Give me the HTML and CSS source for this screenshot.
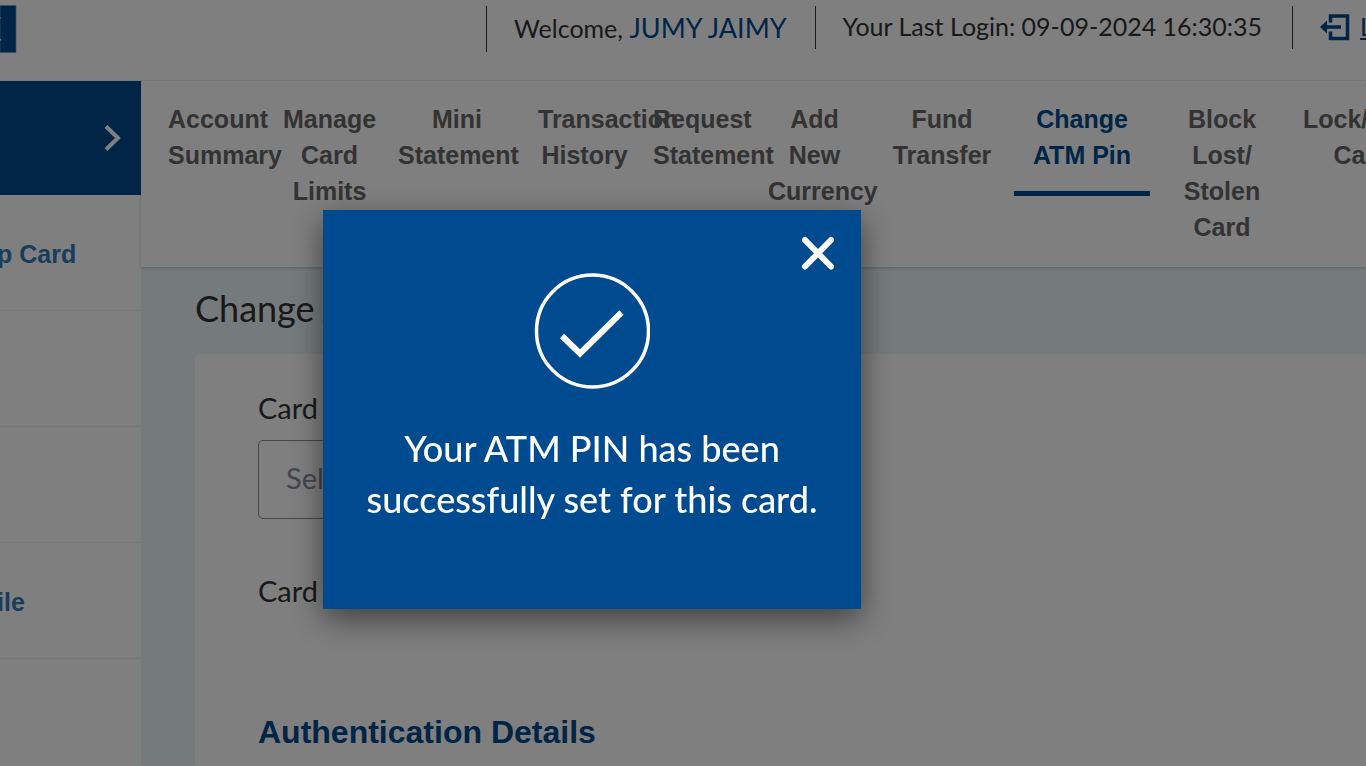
FILE: index.html
```html
<!DOCTYPE html>
<html lang="en">
<head>
<meta charset="utf-8">
<title>Change ATM Pin</title>
<link rel="stylesheet" href="styles.css">
</head>
<body>
<header class="topbar">
  <svg class="logo" width="17" height="48" viewBox="0 0 17 48" aria-hidden="true"><rect width="16" height="47" y="0.5" fill="#004b8f" stroke="#6c9dc8" stroke-width=".7"/><path d="M0 13L.6 12.500M0 34L1 35.500" stroke="#fff" stroke-width="1.200"/></svg>
  <div class="user">
    <div class="cell welcome">Welcome, <span class="name">JUMY JAIMY</span></div>
    <div class="cell login">Your Last Login: 09-09-2024 16:30:35</div>
    <div class="cell logout">
      <a href="#" class="logout-link"><svg width="30" height="28" viewBox="0 0 30 28" fill="none" stroke="#004b8f" stroke-width="3.500" aria-hidden="true"><path d="M10.500 9.500V3H27.500V25.500H10.500V18.500M4 14H21"/><path d="M0 14L7 7.500V20.500Z" fill="#004b8f" stroke="none"/></svg><span class="logout-text">Logout</span></a>
    </div>
  </div>
</header>
<div class="layout">
  <aside class="sidebar">
    <button class="side-item active" aria-label="Open"><svg width="18" height="26" viewBox="0 0 18 26" fill="none" stroke="#fff" stroke-width="4" aria-hidden="true"><path d="M2 1.500L14 13L2 24.500"/></svg></button>
    <a href="#" class="side-item">p Card</a>
    <div class="side-item"></div>
    <div class="side-item"></div>
    <a href="#" class="side-item">ile</a>
    <div class="side-item"></div>
  </aside>
  <main class="main">
    <nav class="tabs">
      <a href="#" class="tab narrow">Account Summary</a>
      <a href="#" class="tab narrow">Manage Card Limits</a>
      <a href="#" class="tab">Mini Statement</a>
      <a href="#" class="tab narrow">Transaction History</a>
      <a href="#" class="tab narrow">Request Statement</a>
      <a href="#" class="tab narrow">Add<br>New Currency</a>
      <a href="#" class="tab">Fund Transfer</a>
      <a href="#" class="tab current">Change ATM Pin</a>
      <a href="#" class="tab">Block Lost/<br>Stolen Card</a>
      <a href="#" class="tab">Lock/Unlock Card</a>
    </nav>
    <section class="content">
      <h1 class="title">Change ATM Pin</h1>
      <div class="panel">
        <label class="label" for="card">Card</label>
        <select id="card" class="select"><option>Select</option></select>
        <p class="label second">Card</p>
        <h2 class="subtitle">Authentication Details</h2>
      </div>
    </section>
  </main>
</div>
<div class="backdrop">
  <div class="dialog" role="dialog" aria-label="PIN set">
    <button class="close" aria-label="Close"><svg width="34" height="34" viewBox="0 0 34 34" fill="none" stroke="#fff" stroke-width="6" stroke-linecap="round" aria-hidden="true"><path d="M4 4L30 30.500M30 4L4 30.500"/></svg></button>
    <svg class="tick" width="116" height="116" viewBox="0 0 116 116" fill="none" stroke="#fff" aria-hidden="true"><circle cx="58.500" cy="58" r="56" stroke-width="3.500"/><path d="M28 63L46 80.500L87.500 39.500" stroke-width="6"/></svg>
    <p class="message">Your ATM PIN has been successfully set for this card.</p>
  </div>
</div>
</body>
</html>
```
FILE: styles.css
```css
* { box-sizing: border-box; }
body {
  margin: 0;
  height: 100vh;
  overflow: hidden;
  display: flex;
  flex-direction: column;
  background: #fff;
  color: #333;
  font-family: Lato, sans-serif;
}
a { text-decoration: none; color: inherit; }
button { border: 0; padding: 0; background: none; }
svg { display: block; flex-shrink: 0; }

.topbar {
  display: flex;
  justify-content: space-between;
  align-items: flex-start;
  flex-shrink: 0;
  height: 81px;
  padding-top: 5px;
  border-bottom: 1px solid #f0f0f0;
  overflow: hidden;
}
.user { display: flex; align-items: flex-start; margin: 1px -98px 0 0; white-space: nowrap; }
.cell { border-left: 1px solid #333; padding: 0 28px 0 27px; height: 43px; font-size: 25px; line-height: 41px; }
.login { padding-right: 30px; }
.welcome { height: 46px; line-height: 44px; }
.name { font-size: 27px; color: #004b8f; }
.logout-link { display: flex; align-items: center; gap: 10px; color: #004b8f; }
.logout-text { text-decoration: underline; }

.layout { display: flex; flex: 1; min-height: 0; }
.sidebar { width: 141px; flex-shrink: 0; overflow: hidden; }
.side-item {
  display: flex;
  align-items: center;
  width: 100%;
  height: 116px;
  padding-top: 4px;
  border-bottom: 1px solid #eee;
  color: #337ab7;
  font: bold 25px "Liberation Sans", Arial, sans-serif;
  text-indent: -3px;
}
.side-item.active { height: 114px; justify-content: flex-end; padding: 0 19px 0 0; background: #004b8f; border: 0; }

.main { flex: 1; min-width: 0; display: flex; flex-direction: column; background: #ebf5fb; }
.tabs {
  display: flex;
  align-items: flex-start;
  gap: 4px;
  flex-shrink: 0;
  padding: 20px 0 22px 18px;
  background: #fff;
  box-shadow: 0 1px 3px rgba(0, 0, 0, .2);
  overflow: hidden;
  color: #666;
  font: bold 25px/36px "Liberation Sans", Arial, sans-serif;
  text-align: center;
}
.tab { flex: 0 0 136px; min-width: 0; padding: 0 9px; }
.tab.narrow { flex-basis: 111px; }
.tab.current { padding-bottom: 18px; border-bottom: 5px solid #004b8f; color: #004b8f; }

.content { flex: 1; display: flex; flex-direction: column; padding: 19px 0 0 54px; }
.title { margin: 0 0 24px; font-size: 36px; line-height: 44px; font-weight: 400; }
.panel { flex: 1; padding: 36px 63px; background: #fff; border-radius: 6px 0 0 0; }
.label { display: block; margin: 0 0 14px; font-size: 29px; line-height: 36px; }
.select {
  display: block;
  width: 560px;
  height: 79px;
  padding: 0 27px 4px;
  border: 1px solid #868d96;
  border-radius: 5px;
  background: #fff;
  color: #868d96;
  font: 29px Lato, sans-serif;
  appearance: none;
}
.second { margin: 54px 0 105px; }
.subtitle { margin: 0; color: #004b8f; font: bold 32px/36px "Liberation Sans", Arial, sans-serif; }

.backdrop { position: fixed; inset: 0; background: rgba(0, 0, 0, .5); }
.dialog {
  position: absolute;
  left: 323px;
  top: 210px;
  width: 538px;
  padding: 26px 26px 84px;
  display: flex;
  flex-direction: column;
  align-items: center;
  background: #004b8f;
  box-shadow: 0 10px 30px rgba(0, 0, 0, .5);
  color: #fff;
}
.close { align-self: flex-end; }
.tick { margin: 3px 0 34px; }
.message { margin: 0; max-width: 460px; font-size: 36px; font-weight: 500; line-height: 51px; text-align: center; }
```
